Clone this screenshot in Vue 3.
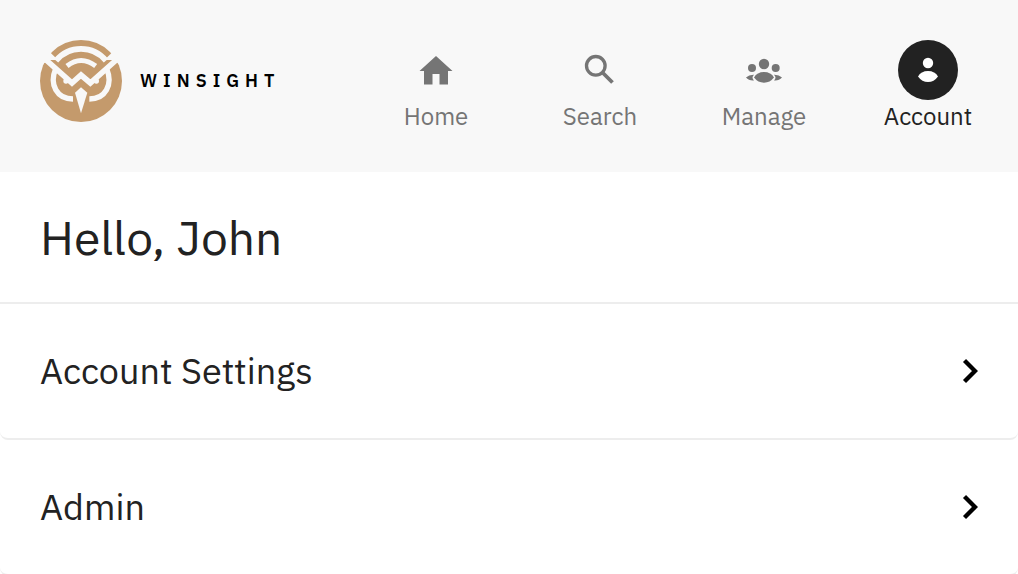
<script setup>
const navItems = [
  { id: 'home', label: 'Home' },
  { id: 'search', label: 'Search' },
  { id: 'manage', label: 'Manage' },
  { id: 'account', label: 'Account', active: true },
]
const rows = ['Account Settings', 'Admin']
</script>

<template>
  <div class="page">
    <header class="header">
      <a href="#" class="brand">
        <svg class="logo" viewBox="31 30 246 246" aria-hidden="true">
          <circle cx="154" cy="153" r="123" fill="#c49a6c" />
          <g fill="none" stroke="#f8f8f8" stroke-width="17">
            <path d="M79 92A97 97 0 0 1 229 92" />
            <path d="M112 108Q154 75 198 108" stroke-width="15" />
            <path d="M46 87L127 159L154 135L182 159L263 87" />
            <path d="M78 116C58 164 82 207 130 207M231 116C251 164 227 207 179 207" stroke-width="16" />
          </g>
          <g fill="#f8f8f8">
            <path d="M48 54L78 83L86 90H62L42 100L16 85ZM261 54L231 83L223 90H248L267 100L293 85Z" />
            <path d="M154 172L173 188L154 250L136 188Z" />
            <circle cx="109" cy="153" r="8" />
            <circle cx="200" cy="153" r="8" />
          </g>
        </svg>
        <span class="brand-name">WINSIGHT</span>
      </a>
      <nav class="nav" aria-label="Main">
        <a v-for="item in navItems" :key="item.id" href="#" class="nav-item" :class="{ active: item.active }" :aria-current="item.active ? 'page' : undefined">
          <span class="nav-icon">
            <svg viewBox="0 0 60 60" fill="currentColor" aria-hidden="true">
              <path v-if="item.id === 'home'" d="M30 16L46.500 31H42V44.500H33.500V34H26.500V44.500H18V31H13.500Z" />
              <g v-else-if="item.id === 'search'" fill="none" stroke="currentColor" stroke-width="3.300">
                <circle cx="25.800" cy="25.800" r="9.300" />
                <path d="M32 32L42.500 42.500" stroke-width="3.800" />
              </g>
              <g v-else-if="item.id === 'manage'">
                <circle cx="30" cy="24" r="5.200" />
                <circle cx="18" cy="28" r="4" />
                <circle cx="41.700" cy="28" r="4" />
                <path d="M20 37.500Q23 32 30 32T40 37.500Q36 42.700 30 42.700T20 37.500Z" />
                <path d="M12 37.500Q15 34.500 20 34.700Q17 37.500 20 40.500Q15 41 12 37.500ZM48 37.500Q45 34.500 40 34.700Q43 37.500 40 40.500Q45 41 48 37.500Z" />
              </g>
              <g v-else>
                <circle cx="30" cy="23" r="5.200" />
                <path d="M20 36.500Q23 31 30 31T40 36.500Q36 42 30 42T20 36.500Z" />
              </g>
            </svg>
          </span>
          <span class="nav-label">{{ item.label }}</span>
        </a>
      </nav>
    </header>
    <main>
      <h1 class="greeting">Hello, John</h1>
      <a v-for="row in rows" :key="row" href="#" class="row">
        <span>{{ row }}</span>
        <svg class="chevron" viewBox="0 0 16 26" aria-hidden="true">
          <path d="M2.500 2.500L13 13L2.500 23.500" fill="none" stroke="#000" stroke-width="4.300" />
        </svg>
      </a>
    </main>
  </div>
</template>

<style>
body {
  margin: 0;
  background: #fff;
}
</style>

<style scoped>
.page {
  font-family: "IBM Plex Sans", Roboto, "Liberation Sans", sans-serif;
  color: #222;
}
.header {
  display: flex;
  align-items: flex-start;
  justify-content: space-between;
  padding: 40px 8px 40px 40px;
  background: #f8f8f8;
}
.brand {
  display: flex;
  align-items: center;
  gap: 18px;
  color: #000;
  text-decoration: none;
}
.logo {
  width: 82px;
  height: 82px;
}
.brand-name {
  font-size: 18px;
  line-height: 24px;
  font-weight: 600;
  letter-spacing: 6px;
}
.nav {
  display: flex;
}
.nav-item {
  display: flex;
  flex-direction: column;
  align-items: center;
  width: 164px;
  color: #757575;
  text-decoration: none;
}
.nav-icon {
  width: 60px;
  height: 60px;
  border-radius: 50%;
}
.nav-icon svg {
  display: block;
}
.nav-label {
  font-size: 24px;
  line-height: 32px;
}
.active {
  color: #222;
}
.active .nav-icon {
  background: #222;
  color: #fff;
}
.greeting {
  margin: 0;
  padding: 33px 40px;
  border-bottom: 2px solid #ededed;
  font-size: 48px;
  line-height: 64px;
  font-weight: 400;
}
.row {
  display: flex;
  align-items: center;
  justify-content: space-between;
  padding: 43px 40px;
  border-bottom: 2px solid #ededed;
  border-radius: 0 0 8px 8px;
  color: #222;
  font-size: 36px;
  line-height: 48px;
  text-decoration: none;
}
.chevron {
  width: 16px;
  height: 26px;
}
</style>
